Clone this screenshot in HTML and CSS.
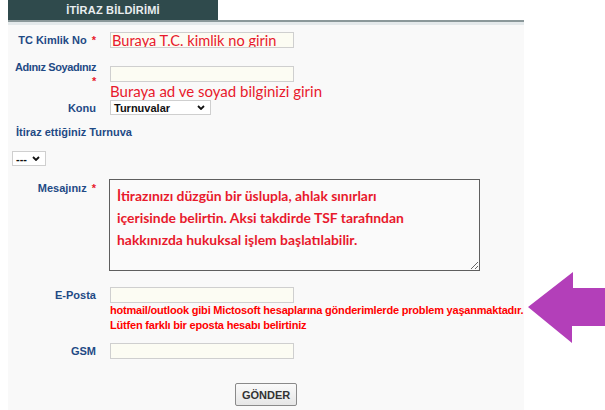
FILE: index.html
```html
<!DOCTYPE html>
<html>
<head>
  <title>İtiraz Bildirimi</title>
  <link rel="stylesheet" href="styles.css">
</head>
<body>
  <div class="panel">
    <!-- Header tab -->
    <div class="tabbar">
      <div class="tab">İTİRAZ BİLDİRİMİ</div>
    </div>

    <!-- Form -->
    <form class="form" onsubmit="return false;">
      <div class="row row-tc">
        <label class="lbl">TC Kimlik No <span class="req">*</span></label>
        <div class="field">
          <input class="txt hint" value="Buraya T.C. kimlik no girin">
        </div>
      </div>

      <div class="row row-name">
        <label class="lbl lbl-top lbl-tight">Adınız Soyadınız<br><span class="req">*</span></label>
        <div class="field field-name">
          <input class="txt">
          <div class="hint-text">Buraya ad ve soyad bilginizi girin</div>
        </div>
      </div>

      <div class="row row-konu">
        <label class="lbl">Konu</label>
        <div class="field">
          <div class="select select-konu">
            <span>Turnuvalar</span>
            <svg class="chev" viewBox="0 0 8 5"><polyline points="1,1 4,4 7,1"/></svg>
          </div>
        </div>
      </div>

      <div class="heading">İtiraz ettiğiniz Turnuva</div>

      <div class="select select-small">
        <span>---</span>
        <svg class="chev" viewBox="0 0 8 5"><polyline points="1,1 4,4 7,1"/></svg>
      </div>

      <div class="row row-msg">
        <label class="lbl lbl-top">Mesajınız <span class="req">*</span></label>
        <div class="field">
          <textarea class="msg" readonly>İtirazınızı düzgün bir üslupla, ahlak sınırları
içerisinde belirtin. Aksi takdirde TSF tarafından
hakkınızda hukuksal işlem başlatılabilir.</textarea>
        </div>
      </div>

      <div class="row row-mail">
        <label class="lbl lbl-input">E-Posta</label>
        <div class="field">
          <input class="txt">
          <div class="warn">hotmail/outlook gibi Mictosoft hesaplarına gönderimlerde problem yaşanmaktadır.<br>Lütfen farklı bir eposta hesabı belirtiniz</div>
        </div>
      </div>

      <div class="row row-gsm">
        <label class="lbl">GSM</label>
        <div class="field">
          <input class="txt">
        </div>
      </div>

      <div class="actions">
        <button type="submit" class="send-btn">GÖNDER</button>
      </div>
    </form>
  </div>

  <!-- Annotation arrow -->
  <svg class="arrow" viewBox="0 0 80 76">
    <polygon points="1,37 46,2 46,18 80,18 80,56 45,56 45,73"/>
  </svg>
</body>
</html>
```

FILE: styles.css
```css
body {
  margin: 0;
  padding: 0;
  background: #fff;
  font-family: 'Liberation Sans', Arial, sans-serif;
  font-size: 11px;
  height: 410px;
  overflow: hidden;
}

.panel {
  margin-left: 8px;
  width: 516px;
  height: 410px;
  background: #f9f9f9;
}

/* Header tab */
.tabbar {
  background: #fff;
  height: 20px;
  border-bottom: 2px solid #8b989a;
  box-shadow: 0 3px 0 #e4e9eb;
  margin-bottom: 3px;
}

.tab {
  width: 210px;
  height: 20px;
  background: #2f4a4c;
  color: #e9eef0;
  font-weight: bold;
  font-size: 11px;
  letter-spacing: 0.2px;
  line-height: 21px;
  text-align: center;
}

/* Form rows */
.form {
  display: flex;
  flex-direction: column;
  padding-top: 7px;
}

.row {
  display: flex;
  align-items: center;
}

.lbl {
  width: 88px;
  padding-right: 6px;
  margin-right: 8px;
  text-align: right;
  color: #1f4a85;
  font-weight: bold;
  font-size: 11px;
  line-height: 14px;
  flex-shrink: 0;
}

.lbl-top {
  align-self: flex-start;
}

.lbl-tight {
  letter-spacing: -0.4px;
}

.req {
  color: #e8192c;
  margin-left: 2px;
}

.field {
  display: flex;
  flex-direction: column;
}

.txt {
  box-sizing: border-box;
  width: 184px;
  height: 16px;
  margin: 0;
  padding: 0 3px;
  border: 1px solid #cfcfcf;
  background: #fcfcf3;
  font-family: 'Liberation Sans', Arial, sans-serif;
  font-size: 11px;
  outline: none;
}

.hint {
  color: #e8192c;
  font-family: Lato, 'Liberation Sans', sans-serif;
  font-size: 14.6px;
  padding: 0 1px;
}

.row-name {
  margin-top: 12px;
}

.field-name {
  padding-top: 6px;
}

.hint-text {
  color: #e8192c;
  font-family: Lato, 'Liberation Sans', sans-serif;
  font-size: 15px;
  line-height: 18px;
  white-space: nowrap;
}

/* Select boxes */
.select {
  box-sizing: border-box;
  display: flex;
  align-items: center;
  justify-content: space-between;
  height: 15px;
  padding: 0 5px 0 3px;
  border: 1px solid #cfcfcf;
  background: #fff;
  color: #111;
  font-weight: bold;
  font-size: 11px;
}

.select-konu {
  width: 101px;
}

.select-small {
  width: 34px;
  margin-left: 4px;
  margin-top: 12px;
}

.chev {
  width: 8px;
  height: 5px;
  fill: none;
  stroke: #111;
  stroke-width: 1.8;
}

.heading {
  margin-top: 10px;
  padding-left: 8px;
  color: #1f4a85;
  font-weight: bold;
  font-size: 11px;
  line-height: 14px;
}

/* Message */
.row-msg {
  margin-top: 13px;
}

.row-msg .lbl {
  padding-top: 2px;
}

.msg {
  box-sizing: border-box;
  width: 371px;
  height: 92px;
  margin: 0 0 0 -1px;
  padding: 5px 7px;
  border: 1px solid #5f5f5f;
  border-radius: 0;
  background: #fafafa;
  color: #e8192c;
  font-family: Lato, 'Liberation Sans', sans-serif;
  font-weight: bold;
  font-size: 13.9px;
  line-height: 22px;
  outline: none;
}

/* E-mail */
.row-mail {
  margin-top: 16px;
}

.lbl-input {
  align-self: flex-start;
  margin-top: 1px;
}

.warn {
  color: #f00;
  font-weight: bold;
  font-size: 11px;
  letter-spacing: -0.2px;
  line-height: 15px;
  white-space: nowrap;
}

.row-gsm {
  margin-top: 10px;
}

/* Submit */
.actions {
  display: flex;
  justify-content: center;
  margin-top: 24px;
}

.send-btn {
  width: 62px;
  height: 23px;
  border: 1px solid #8a8a8a;
  border-radius: 2px;
  background: linear-gradient(#fafafa, #e6e6e6);
  color: #333;
  font-family: 'Liberation Sans', Arial, sans-serif;
  font-weight: bold;
  font-size: 11px;
  cursor: pointer;
}

/* Annotation */
.arrow {
  position: absolute;
  left: 527px;
  top: 270px;
  width: 80px;
  height: 76px;
  fill: #b33fb9;
}
```
